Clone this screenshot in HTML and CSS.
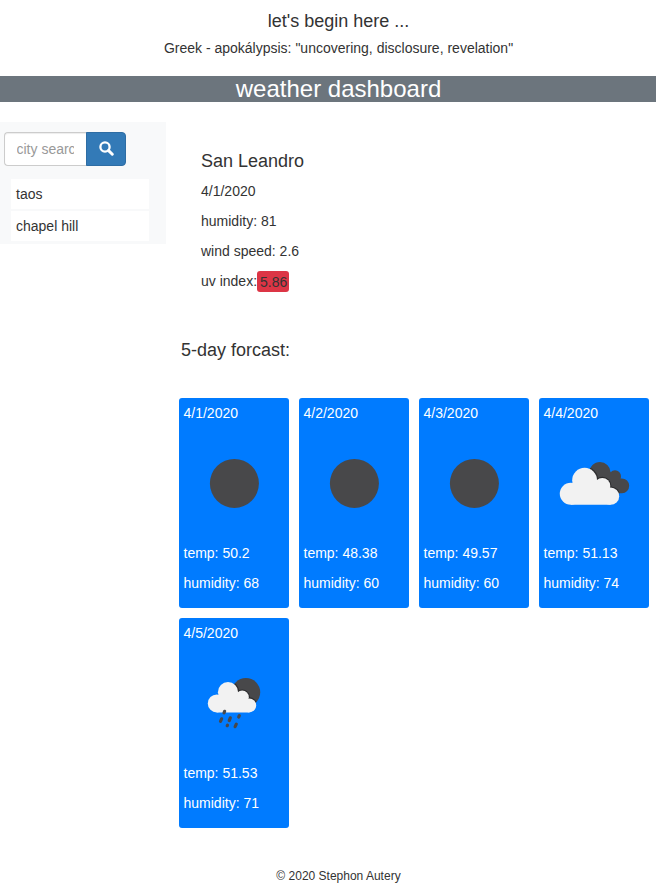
FILE: index.html
```html
<!DOCTYPE html>
<html lang="en">
<head>
<meta charset="utf-8">
<title>weather dashboard</title>
<link rel="stylesheet" href="styles.css">
</head>
<body>
<header class="intro">
  <h4>let's begin here ...</h4>
  <p>Greek - apokálypsis: "uncovering, disclosure, revelation"</p>
</header>
<h3 class="banner">weather dashboard</h3>
<div class="layout">
  <aside class="sidebar">
    <form class="search">
      <input type="text" placeholder="city search" aria-label="city search">
      <button type="button" aria-label="search">
        <svg width="15" height="15" viewBox="0 0 15 15"><circle cx="6" cy="6" r="4.6" fill="none" stroke="#fff" stroke-width="2.3"/><path d="M9.6 9.6L13.3 13.3" stroke="#fff" stroke-width="2.9" stroke-linecap="round"/></svg>
      </button>
    </form>
    <ul class="history"><li>taos</li><li>chapel hill</li></ul>
  </aside>
  <main>
    <section class="current">
      <h4>San Leandro</h4>
      <p>4/1/2020</p>
      <p>humidity: 81</p>
      <p>wind speed: 2.6</p>
      <p class="uv">uv index:<span class="badge">5.86</span></p>
    </section>
    <h4 class="forecast-title">5-day forcast:</h4>
    <section class="forecast">
      <article class="day"><p>4/1/2020</p>
        <svg class="icon" viewBox="0 0 100 100"><circle cx="50.4" cy="50.4" r="24.5" fill="#48484a"/></svg>
        <p>temp: 50.2</p><p>humidity: 68</p></article>
      <article class="day"><p>4/2/2020</p>
        <svg class="icon" viewBox="0 0 100 100"><circle cx="50.4" cy="50.4" r="24.5" fill="#48484a"/></svg>
        <p>temp: 48.38</p><p>humidity: 60</p></article>
      <article class="day"><p>4/3/2020</p>
        <svg class="icon" viewBox="0 0 100 100"><circle cx="50.4" cy="50.4" r="24.5" fill="#48484a"/></svg>
        <p>temp: 49.57</p><p>humidity: 60</p></article>
      <article class="day"><p>4/4/2020</p>
        <svg class="icon" viewBox="0 0 100 100">
          <clipPath id="behind"><circle cx="56" cy="39.6" r="10.6"/><circle cx="71" cy="43.2" r="6"/><circle cx="77.8" cy="52.8" r="7.4"/><path d="M50 40L66 39L77 48L78 60.2H60Z"/></clipPath>
          <g clip-path="url(#behind)">
            <rect width="100" height="100" fill="#48484a"/>
            <g fill="#2c2c2e"><circle cx="40.6" cy="47.2" r="13.6"/><circle cx="58.3" cy="53" r="9.2"/><circle cx="66.6" cy="63.2" r="9.7"/></g>
          </g>
          <g fill="#f2f2f2"><circle cx="26.8" cy="60.8" r="11"/><circle cx="40.6" cy="47.2" r="12.4"/><circle cx="58.3" cy="53" r="8"/><circle cx="66.6" cy="63.2" r="8.6"/><path d="M26.8 71.8L29 50L58 50L66.6 58V71.8Z"/></g>
        </svg>
        <p>temp: 51.13</p><p>humidity: 74</p></article>
      <article class="day"><p>4/5/2020</p>
        <svg class="icon" viewBox="0 0 100 100">
          <clipPath id="sun"><circle cx="61.9" cy="39.3" r="14.3"/></clipPath>
          <g clip-path="url(#sun)">
            <rect width="100" height="100" fill="#48484a"/>
            <g fill="#2c2c2e"><circle cx="44" cy="39.2" r="11.2"/><circle cx="58.2" cy="44.2" r="7.7"/><circle cx="65.2" cy="52.4" r="8.1"/></g>
          </g>
          <g fill="#f2f2f2"><circle cx="32.8" cy="50.4" r="9"/><circle cx="44" cy="39.2" r="10.1"/><circle cx="58.2" cy="44.2" r="6.6"/><circle cx="65.2" cy="52.4" r="7"/><path d="M32.8 59.4L34 42L58 42L65.2 48V59.4Z"/></g>
          <g stroke="#48484a" stroke-width="3.2" stroke-linecap="round"><path d="M40.6 58.3L40 59.8M37.6 65.8L36.5 68.3M46.3 64.8L45.2 67.6M43.5 72.1L43.2 72.7M55.3 62.7L54.7 64M52.3 71.1L51.1 73.7"/></g>
        </svg>
        <p>temp: 51.53</p><p>humidity: 71</p></article>
    </section>
  </main>
</div>
<footer>© 2020 Stephon Autery</footer>
</body>
</html>
```

FILE: styles.css
```css
* { box-sizing: border-box; }
body { margin: 0; background: #fff; color: #333; font: 14px/20px "Liberation Sans", Arial, sans-serif; }
h3, h4 { margin: 0; font-weight: 400; }
h4 { font-size: 18px; line-height: 20px; }
p { margin: 0 0 10px; }
.intro { height: 76px; padding: 11px 0 0 21px; text-align: center; }
.intro p { margin: 7px 0 0; }
.banner { height: 26px; padding-left: 21px; background: #6c757d; color: #fff; font-size: 24px; line-height: 26px; text-align: center; }
.layout { display: flex; align-items: flex-start; margin-top: 20px; }
.sidebar { flex: none; width: 166px; height: 122px; padding: 10px 4px 0; background: #f8f9fa; }
.search { display: flex; }
.search input { width: 83px; height: 34px; padding: 6px 13px 6px 11.5px; border: 1px solid #ccc; border-right: 0; border-radius: 4px 0 0 4px; box-shadow: inset 0 1px 1px rgba(0, 0, 0, .075); background: #fff; color: #555; font: inherit; }
.search input::placeholder { color: #999; opacity: 1; }
.search button { display: flex; align-items: center; justify-content: center; width: 40px; height: 34px; margin-left: -1px; padding: 0 0 2px; border: 1px solid #2e6da4; border-radius: 0 4px 4px 0; background: #337ab7; }
.history { display: grid; gap: 2px; width: 138px; margin: 13px 0 0 7px; padding: 0; list-style: none; }
.history li { height: 30px; padding: 5px; background: #fff; }
main { flex: 1; padding-left: 13px; }
.current { padding: 29px 22px 0; }
.current h4 { margin-bottom: 10px; }
.badge { display: inline-block; height: 21px; padding: 1px 2px 0 3px; border-radius: 3px; background: #dc3545; vertical-align: top; }
.forecast-title { margin: 48px 0 38px 2px; }
.forecast { display: grid; grid-template-columns: repeat(4, 110px); gap: 10px; }
.day { height: 210px; padding: 5px 5px 5px 4.5px; border-radius: 3px; background: #007bff; color: #fff; }
.icon { display: block; width: 100px; height: 100px; margin-bottom: 10px; }
footer { padding: 38px 0 5px 21px; font-size: 12px; text-align: center; }
```
